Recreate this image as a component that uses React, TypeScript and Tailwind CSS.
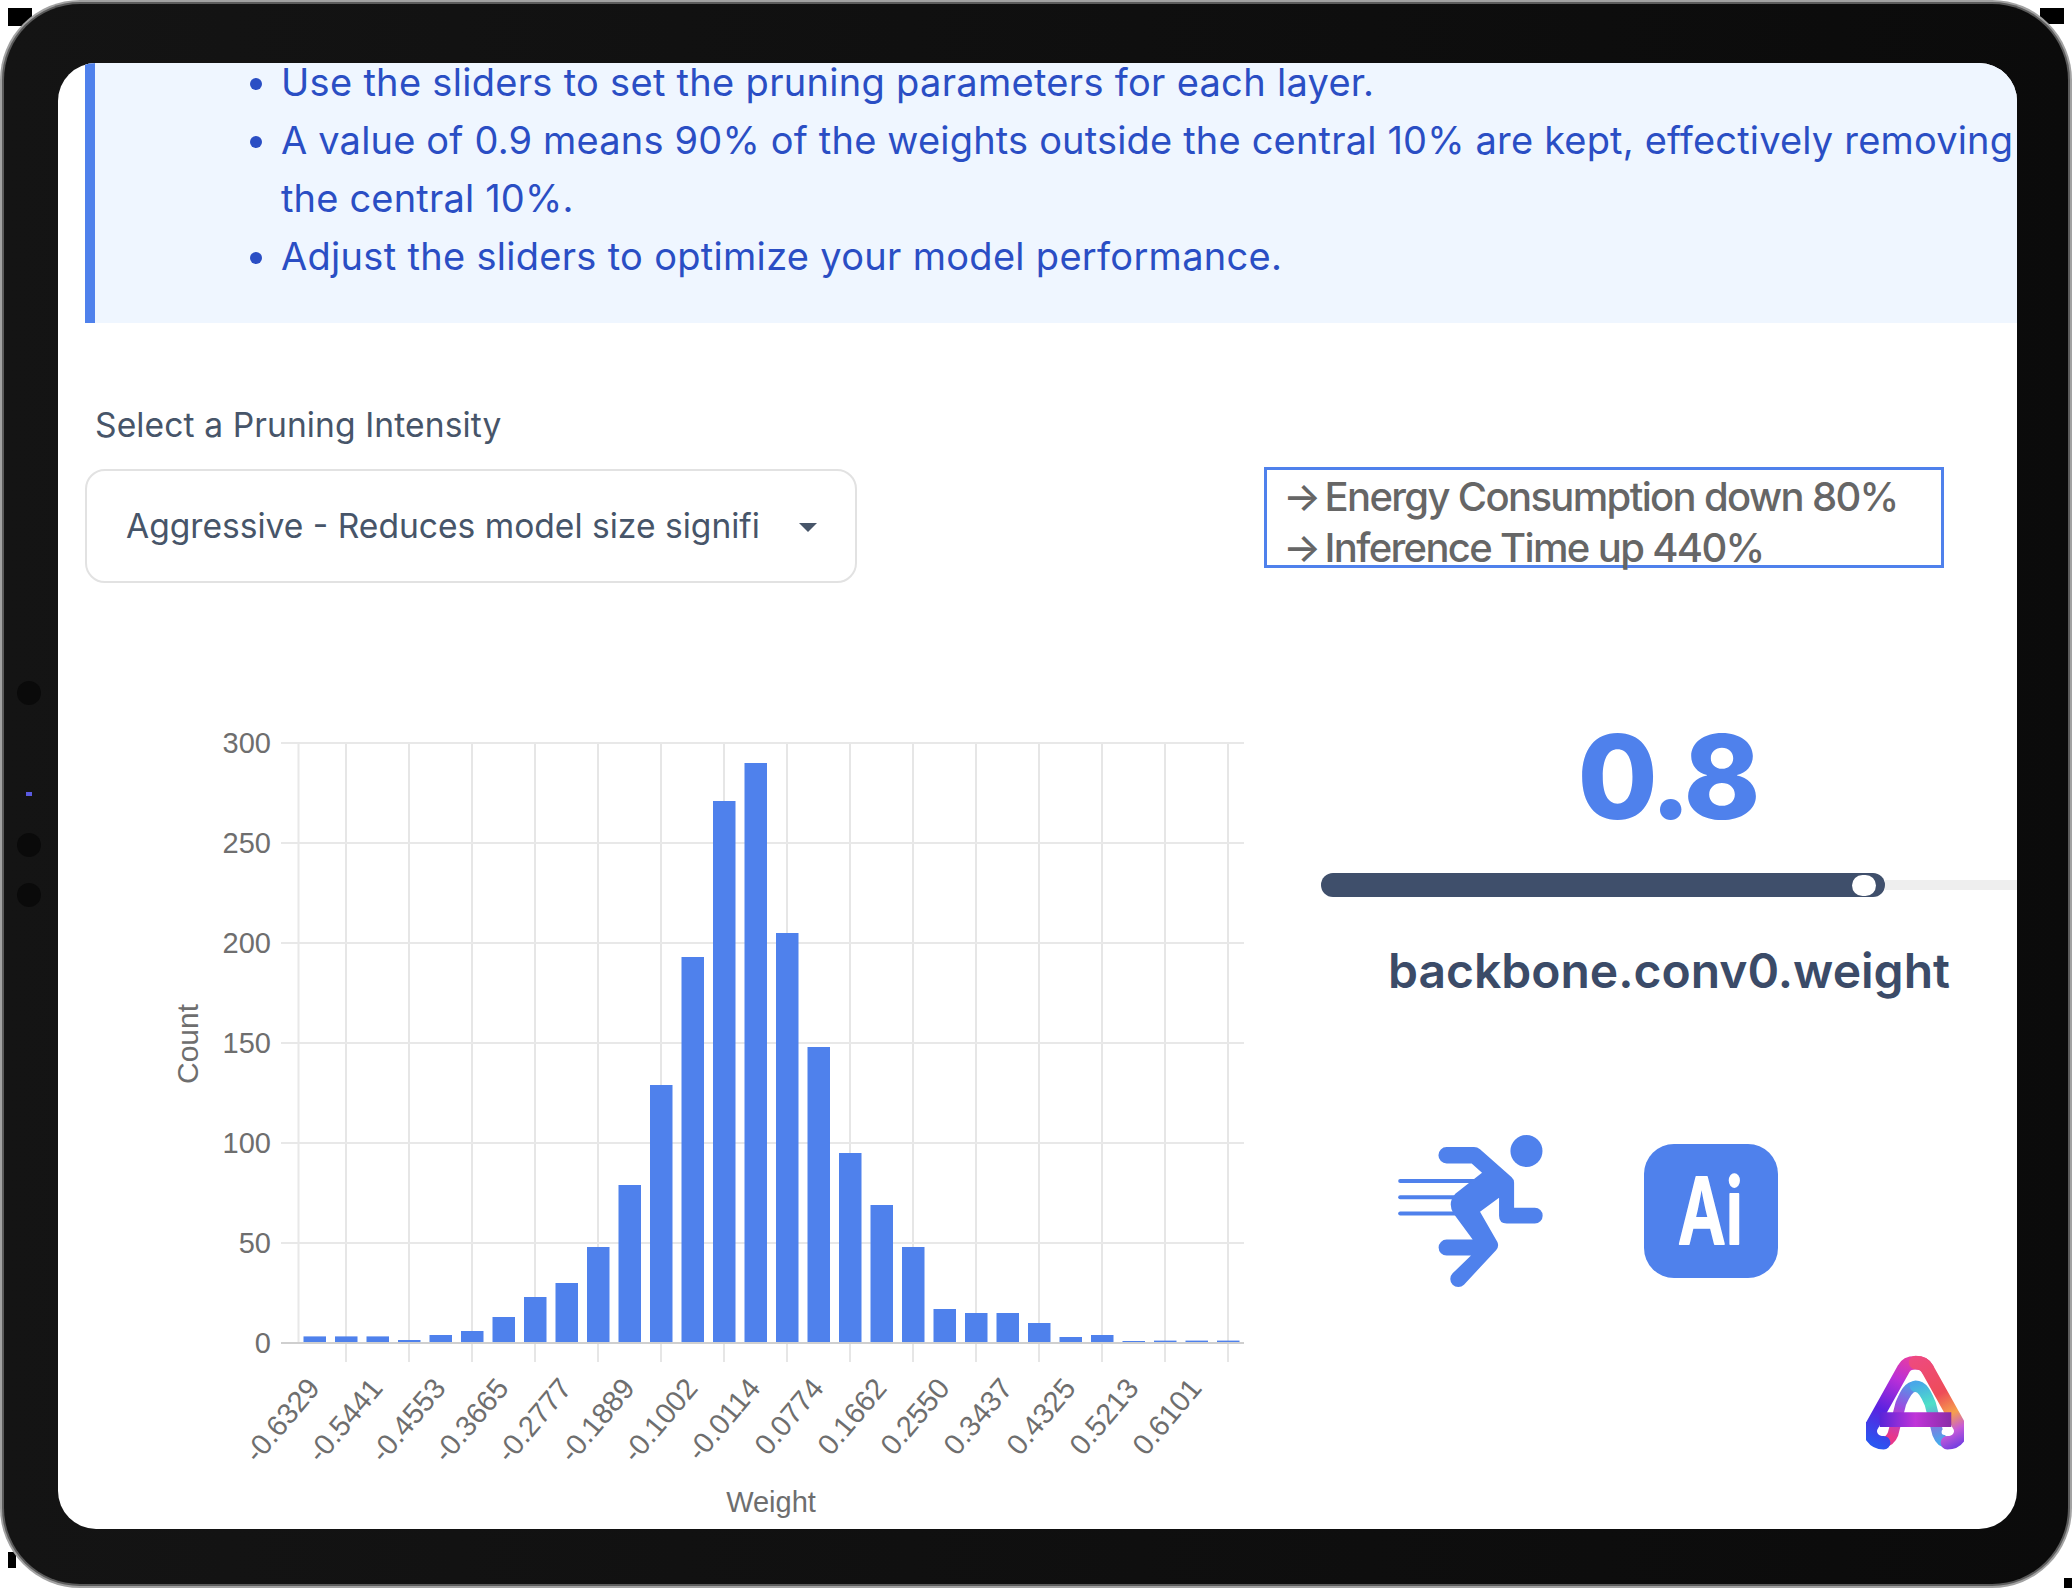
const bars = [2.8, 2.8, 2.8, 1, 3.5, 5.5, 12.5, 22.5, 29.5, 47.5, 78.5, 128.5, 192.5, 270.5, 289.5, 204.5, 147.5, 94.5, 68.5, 47.5, 16.5, 14.5, 14.5, 9.5, 2.5, 3.5, 0.5, 0.7, 0.7, 0.7]
const ticks = ['-0.6329', '-0.5441', '-0.4553', '-0.3665', '-0.2777', '-0.1889', '-0.1002', '-0.0114', '0.0774', '0.1662', '0.2550', '0.3437', '0.4325', '0.5213', '0.6101']
const yLabels = [300, 250, 200, 150, 100, 50, 0]

const chartFont = '"Liberation Sans", Arial, sans-serif'

// svg origin sits at page x=170, y=720
function Histogram() {
  const ox = 170
  const oy = 720
  return (
    <svg width={1080} height={809} viewBox={`${ox} ${oy} 1080 809`} className="shrink-0">
      <line x1={298.5} x2={298.5} y1={743} y2={1343} stroke="#e8e8e8" strokeWidth={2} />
      {ticks.map((_, i) => (
        <line key={i} x1={346 + 63 * i} x2={346 + 63 * i} y1={743} y2={1362} stroke="#e6e6e6" strokeWidth={2} />
      ))}
      {yLabels.map((v) => {
        const y = 1343 - v * 2
        return (
          <g key={v}>
            <line x1={281} x2={1244} y1={y} y2={y} stroke={v === 0 ? '#cfcfcf' : '#e8e8e8'} strokeWidth={2} />
            <text x={271} y={y + 10} textAnchor="end" fontSize={29} fill="#6e6e6e" fontFamily={chartFont}>
              {v}
            </text>
          </g>
        )
      })}
      {bars.map((v, i) => (
        <rect key={i} x={303.5 + 31.5 * i} y={1342 - v * 2} width={22.5} height={v * 2} fill="#4f81ec" />
      ))}
      {ticks.map((t, i) => {
        const x = 346 + 63 * i - 25
        return (
          <text
            key={t}
            x={x}
            y={1389}
            textAnchor="end"
            fontSize={29}
            fill="#6e6e6e"
            fontFamily={chartFont}
            transform={`rotate(-50 ${x} 1389)`}
          >
            {t}
          </text>
        )
      })}
      <text x={198} y={1044} textAnchor="middle" fontSize={30} fill="#6e6e6e" fontFamily={chartFont} transform="rotate(-90 198 1044)">
        Count
      </text>
      <text x={771} y={1512} textAnchor="middle" fontSize={29} fill="#6e6e6e" fontFamily={chartFont}>
        Weight
      </text>
    </svg>
  )
}

function RunnerIcon() {
  return (
    <svg width={145} height={153} viewBox="85 102 433 458" className="shrink-0">
      <circle cx={469} cy={150} r={48} fill="#4f81ec" />
      <g stroke="#4f81ec" strokeWidth={12} strokeLinecap="round">
        <line x1={91} x2={320} y1={240} y2={240} />
        <line x1={91} x2={260} y1={288} y2={288} />
        <line x1={91} x2={260} y1={337} y2={337} />
      </g>
      <path
        fill="#4f81ec"
        d="M230 138H312Q322 138 330 145L424 228Q432 235 432 245V320H494A23.500 23.500 0 0 1 494 367H410Q387 367 387 344V290L330 332L382 422Q388 436 378 447L282 550A24 24 0 0 1 248 516L303 463H230A24 24 0 0 1 230 415H308L250 336Q232 305 256 278L336 215L305 187H230A24.500 24.500 0 0 1 230 138Z"
      />
    </svg>
  )
}

function AiIcon() {
  return (
    <svg width={134} height={134} viewBox="0 0 134 134" className="shrink-0">
      <rect width={134} height={134} rx={30} fill="#4f81ec" />
      <text
        x={34}
        y={100}
        fontSize={92}
        fontWeight={600}
        fill="#ffffff"
        stroke="#ffffff"
        strokeWidth={2}
        strokeLinejoin="round"
        fontFamily="Inter, sans-serif"
        textLength={65}
        lengthAdjust="spacingAndGlyphs"
      >
        Ai
      </text>
    </svg>
  )
}

function BrandMark() {
  return (
    <svg width={98} height={95} viewBox="137 105 293 283" className="shrink-0">
      <defs>
        <linearGradient id="outerL" gradientUnits="userSpaceOnUse" x1="160" y1="370" x2="290" y2="110">
          <stop offset="0" stopColor="#2a55f0" />
          <stop offset="0.35" stopColor="#5a22e0" />
          <stop offset="0.7" stopColor="#b92fd8" />
          <stop offset="1" stopColor="#ee3f9a" />
        </linearGradient>
        <linearGradient id="outerR" gradientUnits="userSpaceOnUse" x1="285" y1="110" x2="420" y2="370">
          <stop offset="0" stopColor="#ee4a80" />
          <stop offset="0.45" stopColor="#ee4c58" />
          <stop offset="0.68" stopColor="#f6a04c" />
          <stop offset="0.85" stopColor="#c65ad8" />
          <stop offset="1" stopColor="#7a40e0" />
        </linearGradient>
        <linearGradient id="innerL" gradientUnits="userSpaceOnUse" x1="215" y1="350" x2="285" y2="190">
          <stop offset="0" stopColor="#e8368a" />
          <stop offset="0.5" stopColor="#a048e0" />
          <stop offset="1" stopColor="#4aa0e8" />
        </linearGradient>
        <linearGradient id="innerR" gradientUnits="userSpaceOnUse" x1="285" y1="190" x2="350" y2="385">
          <stop offset="0" stopColor="#48a8e8" />
          <stop offset="0.35" stopColor="#4ee0c8" />
          <stop offset="0.7" stopColor="#7a80e0" />
          <stop offset="1" stopColor="#38b8f0" />
        </linearGradient>
        <linearGradient id="bar" gradientUnits="userSpaceOnUse" x1="180" y1="298" x2="390" y2="298">
          <stop offset="0" stopColor="#5a25d8" />
          <stop offset="0.5" stopColor="#c035d8" />
          <stop offset="1" stopColor="#8a2ca8" />
        </linearGradient>
      </defs>
      <g fill="none" strokeLinecap="round" strokeLinejoin="round">
        <path d="M285 198C262 198 252 225 241 250L218 340C212 356 200 365 190 365" stroke="url(#innerL)" strokeWidth={32} />
        <path d="M285 198C308 198 318 225 329 250L352 340C358 356 368 365 380 365" stroke="url(#innerR)" strokeWidth={34} />
        <path d="M190 367C160 367 140 340 155 315L250 145C262 122 308 122 320 145" stroke="url(#outerL)" strokeWidth={40} />
        <path d="M285 127C300 127 312 131 320 145L415 315C430 340 410 367 380 367" stroke="url(#outerR)" strokeWidth={40} />
        <path d="M178 298H392" stroke="url(#bar)" strokeWidth={44} strokeLinecap="butt" />
      </g>
      <circle cx={190} cy={334} r={8} fill="#ffffff" />
      <circle cx={372} cy={335} r={9} fill="#ffffff" />
    </svg>
  )
}

function Slider() {
  return (
    <div className="mt-[36px] flex h-[24px] items-center">
      <div className="flex h-[24px] w-[564px] shrink-0 items-center justify-end rounded-[12px] bg-[#3f4f6b] pr-[9px]">
        <div className="h-[21px] w-[24px] rounded-full bg-white" />
      </div>
      <div className="h-[10px] flex-1 bg-[#eeeeee]" />
    </div>
  )
}

function SideDots() {
  return (
    <div className="absolute left-[17px] top-[681px] flex flex-col items-center">
      <div className="h-[24px] w-[24px] rounded-full bg-[#0a0a0a]" />
      <div className="mt-[87px] h-[4px] w-[6px] bg-[#5a5ae0]" />
      <div className="mt-[37px] h-[24px] w-[24px] rounded-full bg-[#0a0a0a]" />
      <div className="mt-[26px] h-[24px] w-[24px] rounded-full bg-[#0a0a0a]" />
    </div>
  )
}

export default function App() {
  return (
    <div className="relative h-[1588px] w-[2072px] bg-white">
      <div className="absolute left-[8px] top-[8px] h-[18px] w-[24px] bg-black" />
      <div className="absolute right-[8px] top-[8px] h-[16px] w-[24px] bg-black" />
      <div className="absolute bottom-[20px] left-[8px] h-[16px] w-[8px] bg-black" />
      <div className="absolute bottom-0 right-0 h-[10px] w-[8px] bg-black" />

      <div className="relative h-full w-full rounded-[80px] bg-[#a2a2a2] p-[2px]">
        <div className="h-full w-full rounded-[78px] bg-[#5c5c5c] p-[2px]">
          <div className="h-full w-full rounded-[76px] bg-linear-to-r from-[#141414] to-[#0b0b0b] pb-[55px] pl-[54px] pr-[51px] pt-[59px]">
            <SideDots />

            <div className="h-[1466px] w-[1959px] overflow-hidden rounded-[38px] bg-white font-['Inter',sans-serif]">
              <div className="ml-[27px] h-[260px] overflow-hidden border-l-[10px] border-[#4f81ec] bg-[#eff6ff]">
                <ul className="ml-[186px] w-[1740px] list-disc text-[38px] leading-[58px] tracking-[0.3px] text-[#2a4ec4]">
                  <li className="mb-[10px] leading-[38px]">Use the sliders to set the pruning parameters for each layer.</li>
                  <li className="tracking-[0.18px]">A value of 0.9 means 90% of the weights outside the central 10% are kept, effectively removing the central 10%.</li>
                  <li>Adjust the sliders to optimize your model performance.</li>
                </ul>
              </div>

              <div className="mt-[80px] flex items-start pl-[27px]">
                <div className="w-[772px] shrink-0">
                  <p className="h-[44px] pl-[10px] text-[33.6px] leading-[44px] tracking-[0.1px] text-[#475569]">Select a Pruning Intensity</p>
                  <div className="mt-[22px] flex h-[114px] items-center justify-between rounded-[20px] border-2 border-[#e2e2e2] pl-[39px] pr-[38px]">
                    <span className="whitespace-nowrap text-[33.6px] text-[#475569]">Aggressive - Reduces model size signifi</span>
                    <span className="mt-[3px] h-0 w-0 border-x-[9px] border-t-[9px] border-x-transparent border-t-[#475569]" />
                  </div>
                </div>
                <div className="ml-[407px] mt-[64px] h-[101px] w-[680px] shrink-0 border-[3px] border-[#4f81ec] pl-[16px] pt-[1px] text-[40px] font-medium leading-[51px] tracking-[-1.65px] text-[#666666]">
                  <p className="whitespace-nowrap">
                    <span className="mr-[-4px]">→</span> Energy Consumption down 80%
                  </p>
                  <p className="whitespace-nowrap">
                    <span className="mr-[-4px]">→</span> Inference Time up 440%
                  </p>
                </div>
              </div>

              <div className="mt-[137px] flex items-start pl-[112px]">
                <Histogram />
                <div className="ml-[71px] w-[696px] shrink-0 text-center">
                  <p className="-mt-[3px] h-[120px] pr-[4px] text-[116px] font-extrabold leading-[120px] tracking-[-4px] text-[#4f81ec]">0.8</p>
                  <Slider />
                  <p className="mt-[44px] h-[60px] text-[48px] font-semibold leading-[60px] text-[#3b4b68]">backbone.conv0.weight</p>
                  <div className="mt-[134px] flex items-start gap-[101px] pl-[77px]">
                    <RunnerIcon />
                    <div className="mt-[9px]">
                      <AiIcon />
                    </div>
                  </div>
                  <div className="mt-[67px] flex pl-[545px]">
                    <BrandMark />
                  </div>
                </div>
              </div>
            </div>
          </div>
        </div>
      </div>
    </div>
  )
}
